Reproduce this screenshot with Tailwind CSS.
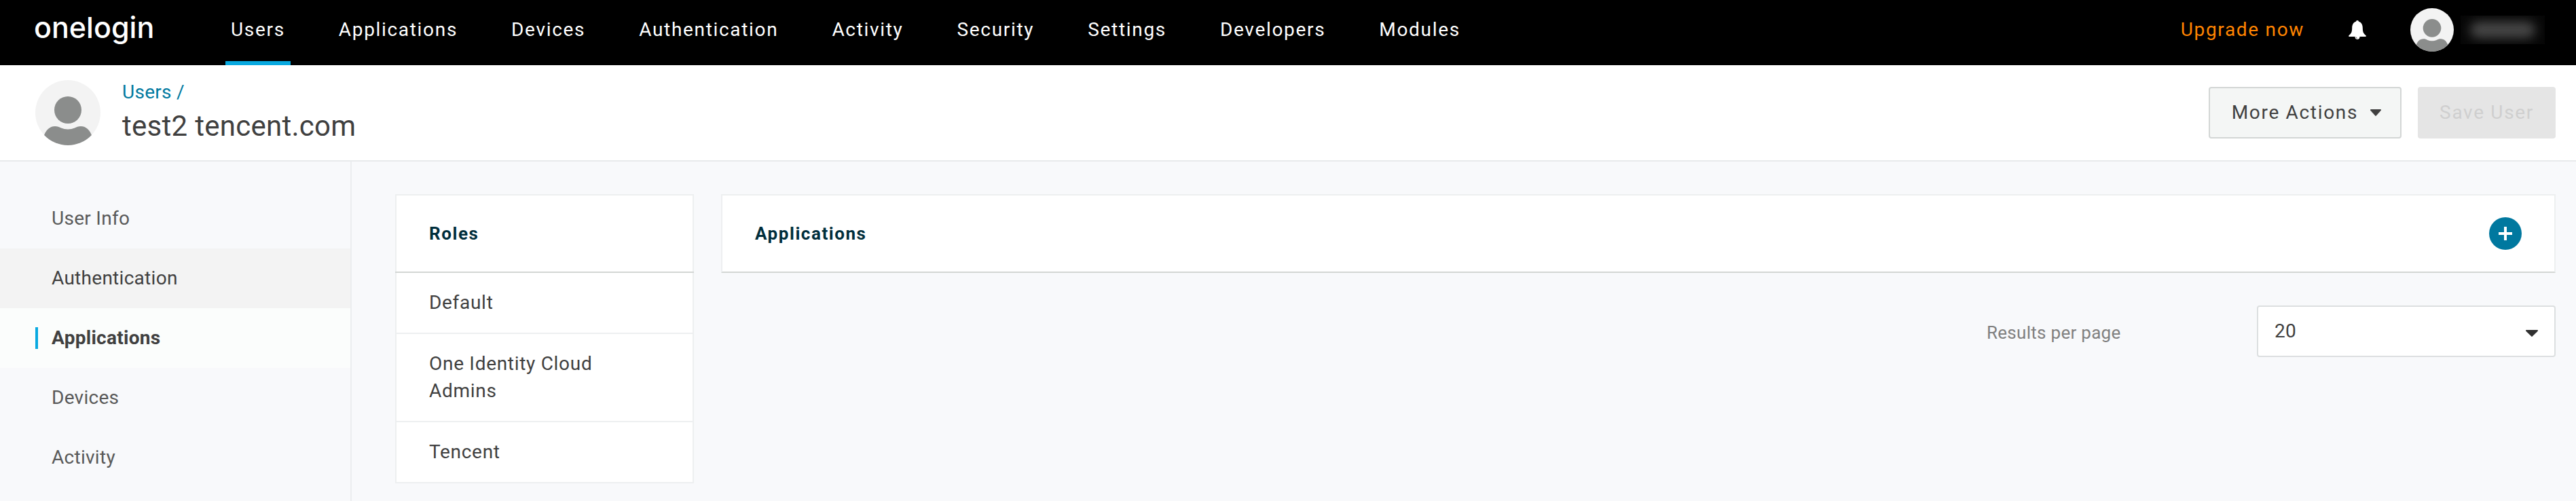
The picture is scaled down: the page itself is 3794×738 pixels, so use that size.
<!DOCTYPE html>
<html lang="en">
<head>
    <meta charset="UTF-8">
    <meta name="viewport" content="width=device-width, initial-scale=1.0">
    <title>test2 tencent.com - OneLogin</title>
    <script src="https://cdn.jsdelivr.net/npm/@tailwindcss/browser@4"></script>
</head>
<body class="min-h-screen flex flex-col bg-[#f8f9fb] text-[28px] leading-10 tracking-[0.01em] text-[#404040] font-['Roboto',sans-serif]">

    <!-- Top bar -->
    <header class="flex items-stretch h-24 pl-[50px] pr-[46px] bg-black text-white tracking-[0.06em]">
        <a href="#" class="w-[282px] pt-2 text-[43px] leading-[64px] font-medium tracking-normal font-['Inter',sans-serif]">onelogin</a>
        <nav class="flex gap-[63px]">
            <a href="#" class="px-2 pt-6 border-b-[6px] border-[#08a9e0]">Users</a>
            <a href="#" class="px-2 pt-6">Applications</a>
            <a href="#" class="px-2 pt-6">Devices</a>
            <a href="#" class="px-2 pt-6">Authentication</a>
            <a href="#" class="px-2 pt-6">Activity</a>
            <a href="#" class="px-2 pt-6">Security</a>
            <a href="#" class="px-2 pt-6">Settings</a>
            <a href="#" class="px-2 pt-6">Developers</a>
            <a href="#" class="px-2 pt-6">Modules</a>
        </nav>
        <div class="ml-auto flex items-center pb-2">
            <a href="#" class="text-[#ff8400]">Upgrade now</a>
            <button type="button" aria-label="Notifications" class="ml-16">
                <svg class="w-7 h-7" viewBox="0 0 28 28" fill="#fff">
                    <path d="M14 0c1.200 0 1.800.8 2 1.800C20 3 21.700 6.500 21.800 11c.1 6 .8 8 4.700 11.200.6.600.5 1.800-.5 1.800H2c-1 0-1.100-1.200-.5-1.800C5.400 19 6.100 17 6.200 11 6.300 6.500 8 3 12 1.800 12.200.8 12.800 0 14 0z"/>
                    <path d="M10.500 24h7c0 2.500-1.500 4-3.500 4s-3.500-1.500-3.500-4z"/>
                    <path d="M12 24.500c.2 1.200.9 1.900 2 2" fill="none" stroke="#000" stroke-width=".7"/>
                </svg>
            </button>
            <button type="button" aria-label="Account" class="ml-16 flex items-center gap-[10px]">
                <svg class="w-16 h-16" viewBox="0 0 96 96">
                    <clipPath id="smallAvatar"><circle cx="48" cy="48" r="48"/></clipPath>
                    <g clip-path="url(#smallAvatar)">
                        <rect width="96" height="96" fill="#f3f3f3"/>
                        <circle cx="48" cy="44" r="20" fill="#8b8d8c"/>
                        <path d="M12 84c3-10 9-16 17-16 4 0 6 1 9 2.500 6 2.500 14 2.500 20 0C61 69 63 68 67 68c8 0 14 6 17 16v12H12z" fill="#8b8d8c"/>
                    </g>
                </svg>
                <span class="flex items-center justify-center w-[124px] h-[42px] bg-[#070707] overflow-hidden">
                    <span class="w-24 h-6 rounded-full bg-[#484848] blur-[8px]"></span>
                </span>
            </button>
        </div>
    </header>

    <!-- Page title -->
    <div class="flex items-center pl-[52px] pr-[30px] h-[142px] bg-white border-b-2 border-[#e8eaec]">
        <svg class="w-24 h-24" viewBox="0 0 96 96" role="img" aria-label="User picture">
            <clipPath id="userAvatar"><circle cx="48" cy="48" r="48"/></clipPath>
            <g clip-path="url(#userAvatar)">
                <rect width="96" height="96" fill="#f3f3f3"/>
                <circle cx="48" cy="44" r="20" fill="#8b8d8c"/>
                <path d="M12 84c3-10 9-16 17-16 4 0 6 1 9 2.500 6 2.500 14 2.500 20 0C61 69 63 68 67 68c8 0 14 6 17 16v12H12z" fill="#8b8d8c"/>
            </g>
        </svg>
        <div class="ml-8">
            <a href="#" class="block text-[#00799f]">Users /</a>
            <h1 class="text-[42px] leading-[60px]">test2 tencent.com</h1>
        </div>
        <div class="ml-auto flex gap-6">
            <button type="button" class="flex items-center gap-[18px] h-[76px] pl-8 pr-7 rounded-sm border-2 border-[#d3d6d5] bg-[#f4f6f5] tracking-[0.06em]">
                More Actions
                <svg class="w-4 h-[10px]" viewBox="0 0 16 10" fill="#404040"><path d="M1 0h14c1 0 1.300 1 .7 1.700l-7 7.900c-.4.400-1 .4-1.400 0l-7-7.900C-.3 1 0 0 1 0z"/></svg>
            </button>
            <button type="button" disabled class="h-[76px] px-8 rounded-sm bg-[#e5e5e5] text-[#cfcfcf] tracking-[0.06em]">Save User</button>
        </div>
    </div>

    <div class="flex flex-1">
        <!-- Sidebar -->
        <aside class="w-[518px] shrink-0 pt-10 border-r-2 border-[#ebedef] text-[#595959]">
            <a href="#" class="flex items-center h-[88px] pl-[76px]">User Info</a>
            <a href="#" class="flex items-center h-[88px] pl-[76px] bg-[#f3f3f3] text-[#404040]">Authentication</a>
            <a href="#" class="flex items-center gap-5 h-[88px] pl-[52px] bg-[#fbfdfc] text-[#404040] font-bold">
                <span class="w-1 h-8 bg-[#08a9e0]"></span>Applications
            </a>
            <a href="#" class="flex items-center h-[88px] pl-[76px]">Devices</a>
            <a href="#" class="flex items-center h-[88px] pl-[76px]">Activity</a>
        </aside>

        <main class="flex flex-1 items-start gap-10 pt-12 pl-16 pr-[30px]">
            <section class="w-[440px] shrink-0 bg-white border-2 border-[#edeff0] tracking-wide">
                <h2 class="flex items-center h-[114px] -mx-[2px] px-[50px] border-b-2 border-[#d3d6d4] text-[26px] font-bold tracking-[0.06em] text-[#002e3c]">Roles</h2>
                <ul class="divide-y-2 divide-[#edeff0]">
                    <li class="px-12 py-6">Default</li>
                    <li class="px-12 py-6">One Identity Cloud Admins</li>
                    <li class="px-12 py-6">Tencent</li>
                </ul>
            </section>

            <section class="flex-1">
                <div class="flex items-center justify-between h-[116px] px-12 bg-white border-2 border-[#edeff0] border-b-[#d3d6d4]">
                    <h2 class="text-[26px] font-bold tracking-[0.06em] text-[#002e3c]">Applications</h2>
                    <button type="button" aria-label="Add application" class="w-12 h-12 rounded-full bg-[#00789f]">
                        <svg class="w-12 h-12" viewBox="0 0 48 48" stroke="#fff" stroke-width="4"><path d="M24 14v20M14 24h20"/></svg>
                    </button>
                </div>
                <div class="flex items-center justify-end mt-12">
                    <label for="pageSize" class="w-[398px] pt-1 text-[26px] text-[#808080]">Results per page</label>
                    <div class="relative w-[440px]">
                        <select id="pageSize" class="appearance-none block w-full h-[76px] px-6 rounded-sm border-2 border-[#dcdfe0] bg-white">
                            <option>20</option>
                            <option>50</option>
                            <option>100</option>
                        </select>
                        <svg class="absolute right-[26px] top-9 w-[18px] h-[10px] pointer-events-none" viewBox="0 0 18 10" fill="#303030"><path d="M1 0h16c1 0 1.300 1 .7 1.700l-8 7.900c-.4.400-1 .4-1.400 0l-8-7.900C-.3 1 0 0 1 0z"/></svg>
                    </div>
                </div>
            </section>
        </main>
    </div>

</body>
</html>
